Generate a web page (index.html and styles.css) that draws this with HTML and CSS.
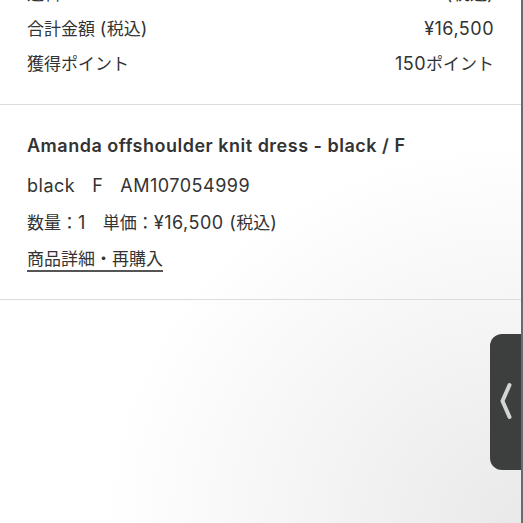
FILE: index.html
```html
<!DOCTYPE html>
<html lang="ja">
<head>
<meta charset="utf-8">
<link rel="stylesheet" href="styles.css">
</head>
<body>
<div class="page">
  <section class="summary">
    <div class="row"><span>送料</span><span><span class="en">¥0 (</span>税込<span class="en">)</span></span></div>
    <div class="row"><span>合計金額 <span class="en">(</span>税込<span class="en">)</span></span><span class="en">¥16,500</span></div>
    <div class="row"><span>獲得ポイント</span><span><span class="en">150</span>ポイント</span></div>
  </section>
  <section class="item">
    <h2 class="title">Amanda offshoulder knit dress - black / F</h2>
    <p class="line"><span class="en">black</span>　<span class="en">F</span>　<span class="en">AM107054999</span></p>
    <p class="line">数量：<span class="en">1</span>　単価：<span class="en">¥16,500 (</span>税込<span class="en">)</span></p>
    <p class="line"><a class="link" href="#">商品詳細・再購入</a></p>
  </section>
  <div class="tab">
    <svg width="12" height="40" viewBox="0 0 12 40"><polyline points="9.5,3 2.5,19 9.5,35" fill="none" stroke="#d4d4d4" stroke-width="4" stroke-linecap="round" stroke-linejoin="round"/></svg>
  </div>
</div>
</body>
</html>
```
FILE: styles.css
```css
html, body {
  margin: 0;
  padding: 0;
  height: 100%;
  overflow: hidden;
}
body {
  font-family: Inter, "Noto Sans CJK JP", sans-serif;
  color: #333;
  font-size: 17px;
}
.en {
  font-size: 18px;
  letter-spacing: 0.5px;
  line-height: 1;
}
.page {
  position: relative;
  height: 523px;
  box-sizing: border-box;
  border-right: 2px solid #6a6a6a;
  background: radial-gradient(ellipse 420px 380px at 523px 523px, #e9e9e9 0%, #f3f3f3 45%, #ffffff 100%);
  overflow: hidden;
}
.summary {
  margin-top: -23px;
  padding: 0 27px 22px 27px;
  border-bottom: 1px solid #dcdcdc;
}
.row {
  display: flex;
  justify-content: space-between;
  align-items: baseline;
  line-height: 35px;
}
.item {
  padding: 29px 27px 21px 27px;
  border-bottom: 1px solid #dcdcdc;
}
.title {
  margin: 0 0 10px 0;
  font-size: 18px;
  letter-spacing: 0.5px;
  line-height: 24px;
  font-weight: 600;
  color: #333;
}
.line {
  margin: 0;
  line-height: 36.5px;
}
.link {
  color: #333;
  text-decoration: underline;
  text-decoration-thickness: 2px;
  text-underline-offset: 5px;
  text-decoration-color: #555;
}
.tab {
  position: absolute;
  right: -2px;
  top: 334px;
  width: 33px;
  height: 136px;
  background: #3d3e3e;
  border-radius: 12px 0 0 12px;
  display: flex;
  align-items: center;
  padding-left: 10px;
  box-sizing: border-box;
}
```
